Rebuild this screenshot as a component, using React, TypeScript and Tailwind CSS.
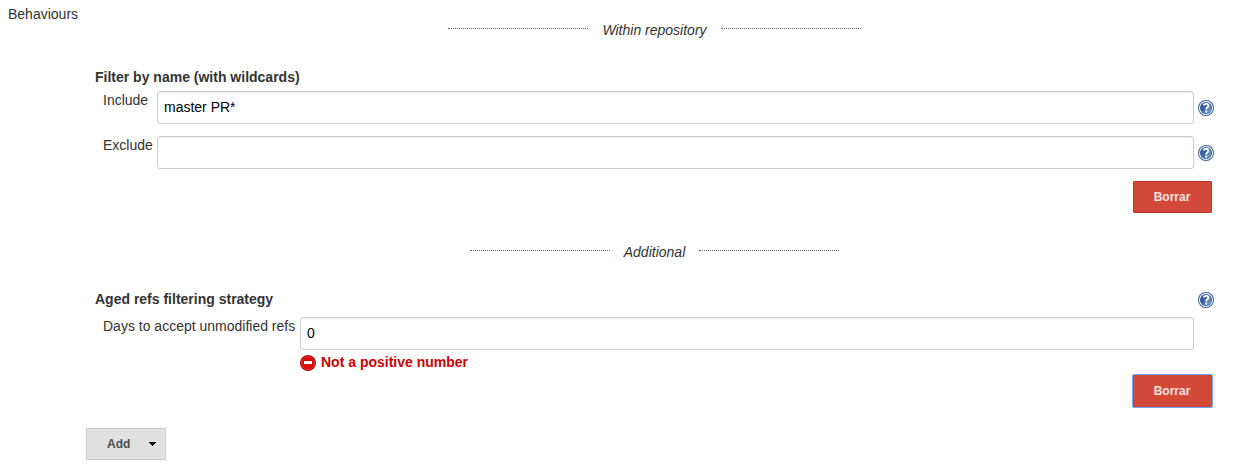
import { useState } from 'react';

function HelpIcon() {
  return (
    <svg width="16" height="16" viewBox="0 0 16 16" className="block shrink-0" aria-label="Help">
      <defs>
        <linearGradient id="help-fill" x1="0" y1="0" x2="1" y2="1">
          <stop offset="0" stopColor="#204a87" />
          <stop offset="0.45" stopColor="#3a66a3" />
          <stop offset="1" stopColor="#8fafd6" />
        </linearGradient>
      </defs>
      <circle cx="8" cy="8" r="8" fill="#34609c" />
      <circle cx="8" cy="8" r="7" fill="#fff" />
      <circle cx="8" cy="8" r="6" fill="#2c5795" />
      <circle cx="8" cy="8" r="5.3" fill="url(#help-fill)" />
      <path d="M5.6 5.5C6 4.2 6.9 3.7 8 3.7c1.4 0 2.4.8 2.4 2C10.4 7.3 8.2 7.5 8.2 9.5" fill="none" stroke="#fff" strokeWidth="2" />
      <rect x="7.1" y="10.6" width="2.1" height="2" rx="0.4" fill="#fff" />
    </svg>
  );
}

function ErrorIcon() {
  return (
    <svg width="16" height="16" viewBox="0 0 16 16" className="block shrink-0">
      <circle cx="8" cy="8" r="8" fill="#b50d0d" />
      <circle cx="8" cy="8" r="6.7" fill="#d80d0d" stroke="#de3c3c" strokeWidth="0.7" />
      <rect x="4" y="6" width="8" height="3" fill="#fff" />
    </svg>
  );
}

function SectionDivider({ title }: { title: string }) {
  return (
    <div className="flex h-5 justify-center">
      <span className="mt-2 h-px w-[140px] border-t border-dotted border-[#666]" />
      <span className="mx-3.5 italic">{title}</span>
      <span className="mt-2 h-px w-[140px] border-t border-dotted border-[#666]" />
    </div>
  );
}

function TextField({ label, initial, wide = false, help = false }: { label: string; initial: string; wide?: boolean; help?: boolean }) {
  const [value, setValue] = useState(initial);
  return (
    <div className="flex h-[33px] pr-[9px] pl-[17px]">
      <label className={`-mt-px shrink-0 whitespace-nowrap ${wide ? 'w-[197px]' : 'w-[54px]'}`}>{label}</label>
      <input
        aria-label={label}
        value={value}
        onChange={(e) => setValue(e.target.value)}
        className="h-[33px] min-w-0 flex-1 rounded-[3px] border border-[#ccc] bg-white px-1.5 pb-0.5 text-sm text-black shadow-[inset_0_1px_1px_rgba(0,0,0,0.075)] outline-none"
      />
      <div className="w-5 shrink-0 pt-[9px] pl-1">{help && <HelpIcon />}</div>
    </div>
  );
}

function DeleteButton({ focused = false }: { focused?: boolean }) {
  return (
    <div className="flex justify-end pr-[11px]">
      <button
        className={`h-8 w-[79px] rounded-[1px] border bg-[#d24939] pr-px text-xs font-bold text-[#f2e3e1] ${focused ? 'border-[#c9483d] shadow-[0_0_0_1px_#73a5f5]' : 'border-[#b93527]'}`}
      >
        Borrar
      </button>
    </div>
  );
}

export default function App() {
  return (
    <main className="flex h-[476px] w-[1243px] bg-white font-['Liberation_Sans',Arial,sans-serif] text-sm leading-5 text-[#333]">
      <div className="w-[86px] shrink-0 pt-1 pl-2">Behaviours</div>
      <div className="w-[1137px] pt-5">
        <section>
          <SectionDivider title="Within repository" />
          <h2 className="mt-[27px] mb-1 pl-[9px] font-bold">Filter by name (with wildcards)</h2>
          <div className="flex flex-col gap-3">
            <TextField label="Include" initial="master PR*" help />
            <TextField label="Exclude" initial="" help />
            <DeleteButton />
          </div>
        </section>
        <section className="mt-[29px]">
          <SectionDivider title="Additional" />
          <div className="mt-[27px] mb-2 flex justify-between pr-[9px] pl-[9px]">
            <h2 className="font-bold">Aged refs filtering strategy</h2>
            <div className="pt-[3px]"><HelpIcon /></div>
          </div>
          <TextField label="Days to accept unmodified refs" initial="0" wide />
          <div className="mt-0.5 mb-[3px] flex gap-[5px] pl-[214px] font-bold text-[#c00]">
            <div className="pt-[3px]"><ErrorIcon /></div>
            <span>Not a positive number</span>
          </div>
          <DeleteButton focused />
        </section>
        <button className="mt-[21px] flex h-8 w-20 items-center border border-[#ccc] bg-[#e0e0e0] pr-[9px] pl-5 text-xs font-bold text-[#4d4d4d]">
          Add
          <svg width="8" height="4" viewBox="0 0 8 4" className="ml-auto block" shapeRendering="crispEdges">
            <path d="M0 0h8L4 4z" fill="#000" />
          </svg>
        </button>
      </div>
    </main>
  );
}
